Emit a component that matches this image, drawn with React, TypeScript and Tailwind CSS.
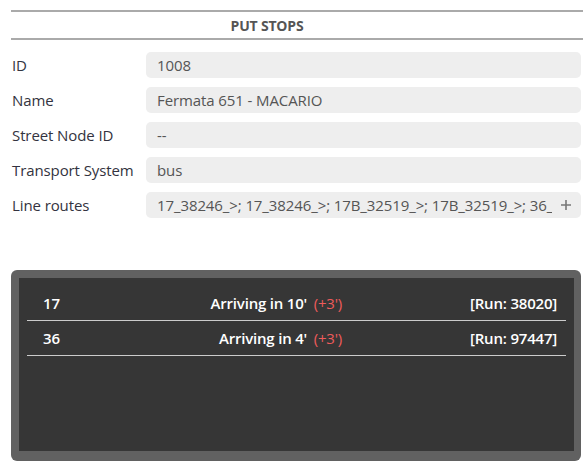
import React from "react";

const rows = [
  { label: "ID", value: "1008" },
  { label: "Name", value: "Fermata 651 - MACARIO" },
  { label: "Street Node ID", value: "--" },
  { label: "Transport System", value: "bus" },
];

const arrivals = [
  { line: "17", mins: "10'", delay: "(+3')", run: "[Run: 38020]" },
  { line: "36", mins: "4'", delay: "(+3')", run: "[Run: 97447]" },
];

export default function App() {
  return (
    <div
      className="w-[583px] h-[476px] bg-white overflow-hidden"
      style={{ fontFamily: "'Open Sans', 'Noto Sans', sans-serif" }}
    >
      <div className="pt-[10px] pl-[11px]">
        <div className="border-t-2 border-b-2 border-[#aaaaaa] h-[30px] flex items-center justify-center">
          <span className="text-[14px] font-bold text-[#555555] tracking-[-0.2px] mr-[60px]">
            PUT STOPS
          </span>
        </div>
      </div>

      <div className="pl-[12px] pr-[2px] pt-[12px] flex flex-col gap-[9px]">
        {rows.map((r) => (
          <div key={r.label} className="flex items-center h-[26px]">
            <div className="w-[134px] text-[15px] text-[#333340] tracking-[-0.1px]">{r.label}</div>
            <div className="flex-1 h-[26px] rounded-[5px] bg-[#eeeeee] flex items-center pl-[11px] text-[15px] text-[#555555] tracking-[-0.1px]">
              {r.value}
            </div>
          </div>
        ))}
        <div className="flex items-center h-[26px]">
          <div className="w-[134px] text-[15px] text-[#333340] tracking-[-0.1px]">Line routes</div>
          <div className="flex-1 min-w-0 h-[26px] rounded-[5px] bg-[#eeeeee] flex items-center pl-[11px] pr-[9px] text-[15px] text-[#555555] tracking-[-0.1px]">
            <span className="flex-1 min-w-0 overflow-hidden whitespace-nowrap">
              17_38246_&gt;; 17_38246_&gt;; 17B_32519_&gt;; 17B_32519_&gt;; 36_5561_&gt;
            </span>
            <svg width="12" height="12" viewBox="0 0 12 12" className="ml-[8px] shrink-0">
              <path d="M6 1v10M1 6h10" stroke="#777777" strokeWidth="1.6" />
            </svg>
          </div>
        </div>
      </div>

      <div className="mt-[52px] ml-[11px] mr-[2px] h-[191px] rounded-[6px] bg-[#616161] p-[8px] pr-[7px] pb-[10px]">
        <div className="h-full bg-[#363636] px-[8px] pt-[8px]">
          {arrivals.map((a) => (
            <div
              key={a.line}
              className="grid grid-cols-[170px_145px_1fr] items-center h-[35px] border-b border-[#cccccc] text-[15px] font-semibold text-white tracking-[-0.2px]"
            >
              <div className="pl-[16px]">{a.line}</div>
              <div className="text-right whitespace-nowrap">
                Arriving in {a.mins}{" "}
                <span className="text-[#ef5b5b] font-normal ml-[3px]">{a.delay}</span>
              </div>
              <div className="text-right pr-[9px]">{a.run}</div>
            </div>
          ))}
        </div>
      </div>
    </div>
  );
}
